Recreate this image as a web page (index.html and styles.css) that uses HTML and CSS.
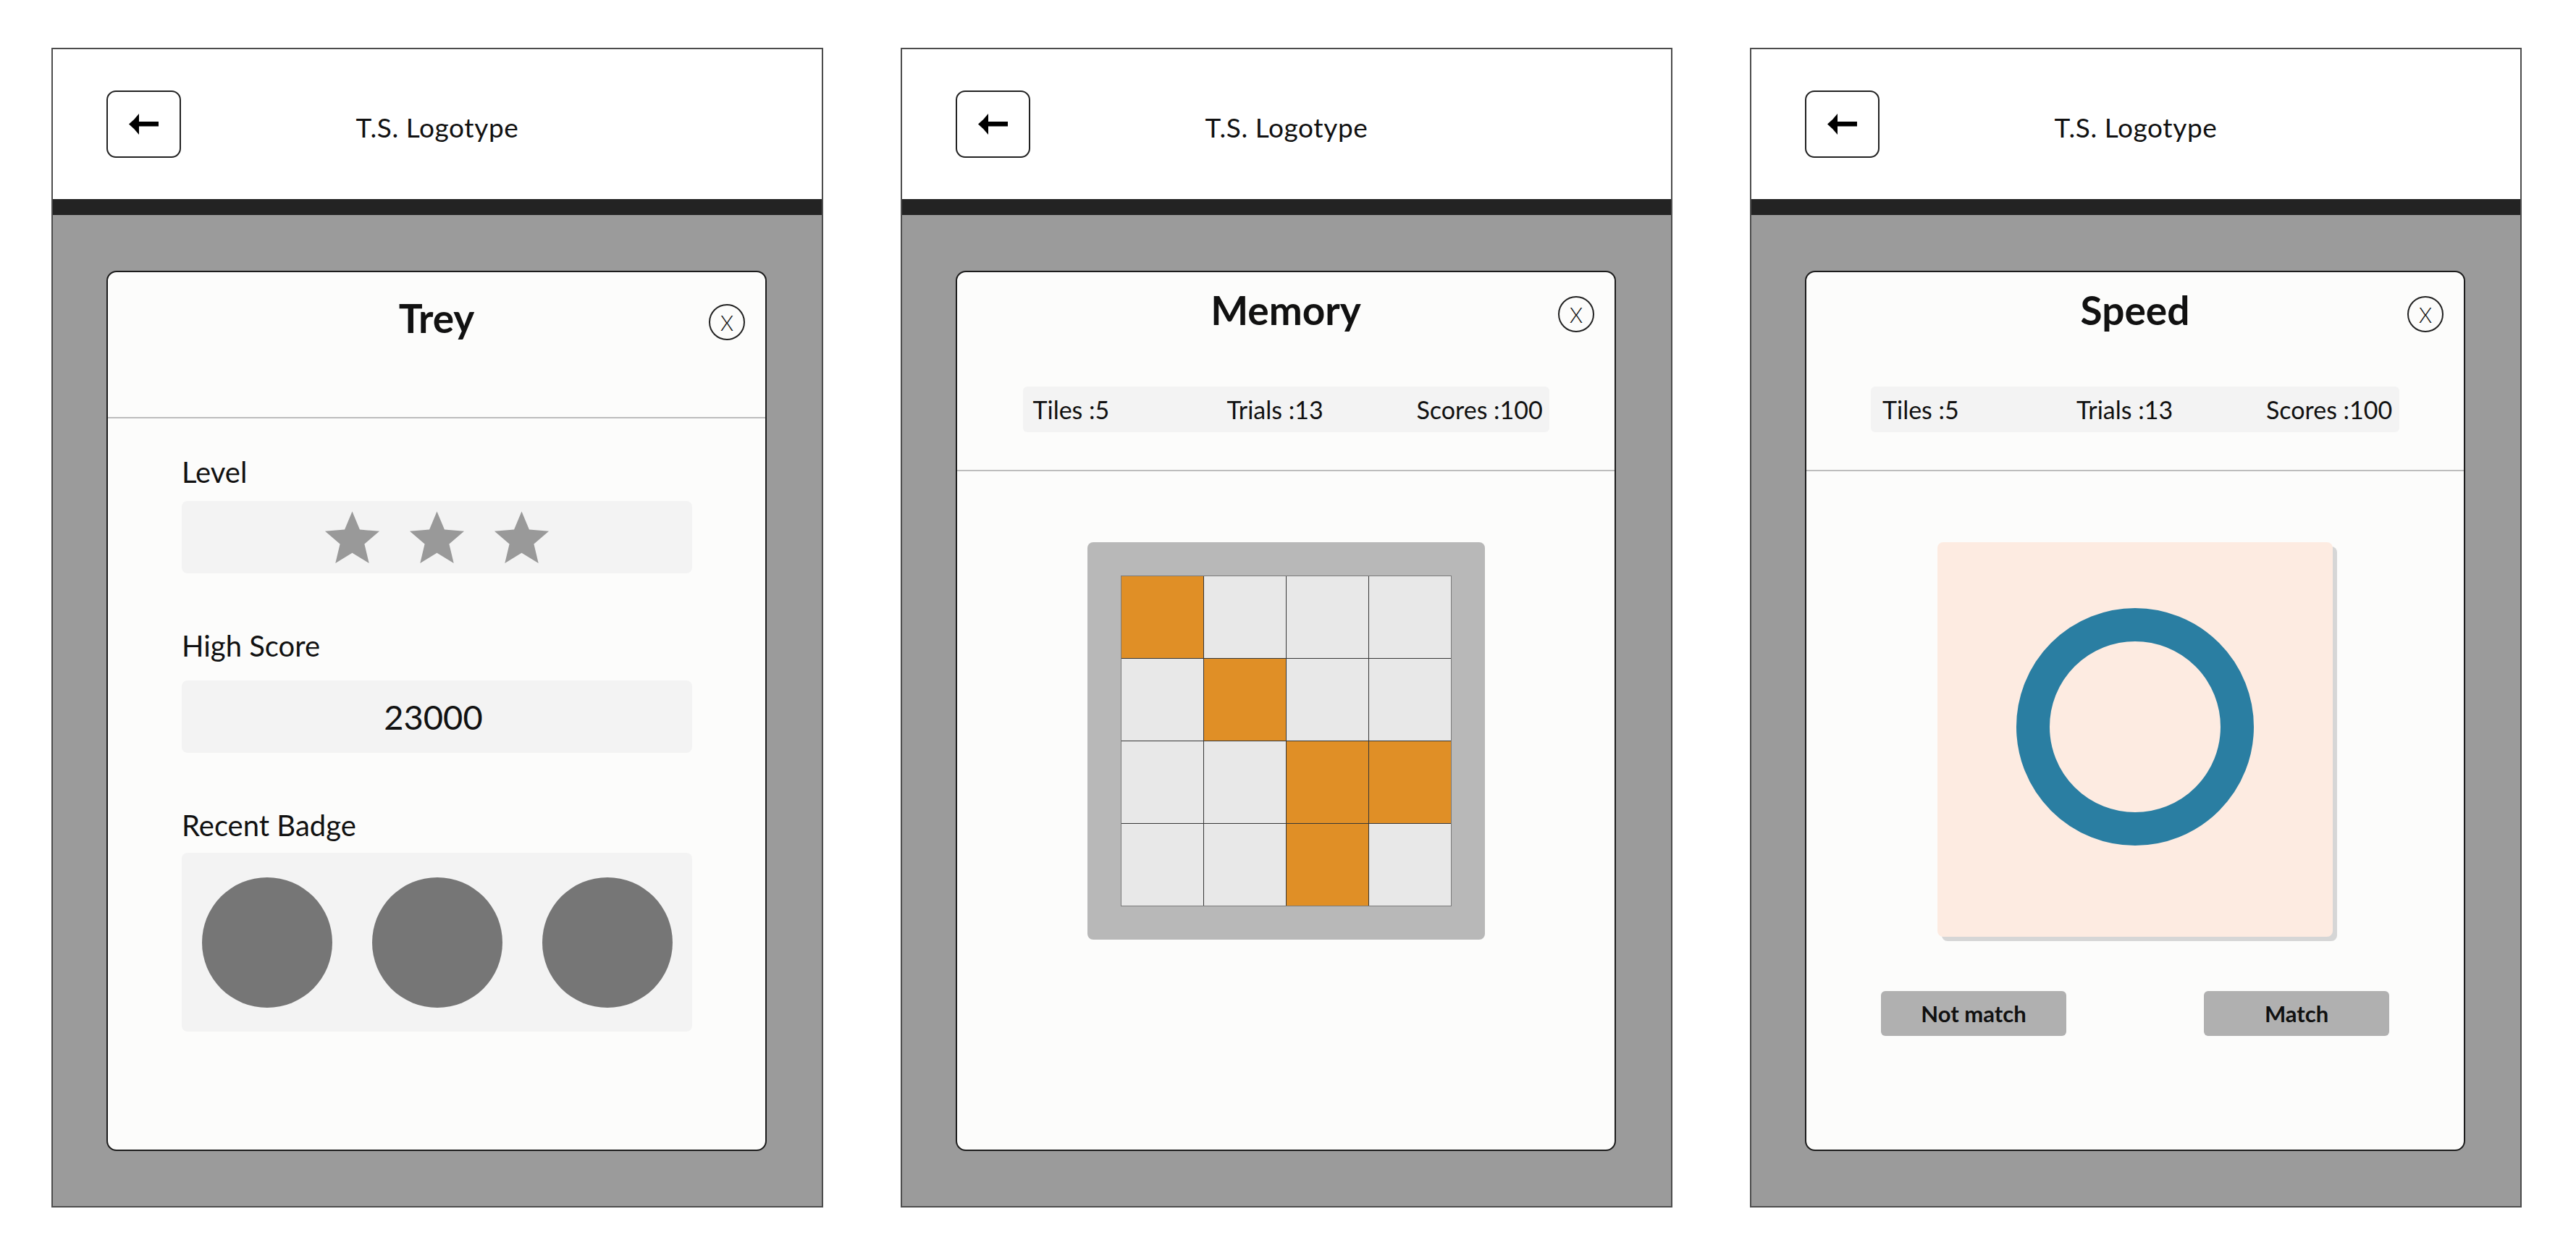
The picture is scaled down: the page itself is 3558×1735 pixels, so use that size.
FILE: index.html
```html
<!DOCTYPE html>
<html lang="en">
<head>
<meta charset="utf-8">
<title>T.S. Screens</title>
<link rel="stylesheet" href="styles.css">
</head>
<body>
<div class="page">

  <!-- Screen 1: Profile -->
  <section class="phone">
    <header class="topbar">
      <div class="back"><svg width="41" height="29" viewBox="0 0 41 29"><path d="M0,14.5 Q8,8 14,0 L14,11 L41,11 L41,17.5 L14,17.5 L14,29 Q8,21 0,14.5 Z" fill="#000"/></svg></div>
      <div class="logo">T.S. Logotype</div>
    </header>
    <div class="strip"></div>
    <div class="stage">
      <div class="modal">
        <div class="modal-head tall">
          <div class="title-row">
            <h1 class="title">Trey</h1>
            <div class="close">X</div>
          </div>
        </div>
        <div class="profile">
          <div class="field">
            <div class="label lvl">Level</div>
            <div class="box stars">
              <svg class="star" width="77" height="73" viewBox="-39 -40 78 73"><polygon points="0,-40 10.58,-14.56 38.04,-12.36 17.12,5.56 23.51,32.36 0,18 -23.51,32.36 -17.12,5.56 -38.04,-12.36 -10.58,-14.56"/></svg>
              <svg class="star" width="77" height="73" viewBox="-39 -40 78 73"><polygon points="0,-40 10.58,-14.56 38.04,-12.36 17.12,5.56 23.51,32.36 0,18 -23.51,32.36 -17.12,5.56 -38.04,-12.36 -10.58,-14.56"/></svg>
              <svg class="star" width="77" height="73" viewBox="-39 -40 78 73"><polygon points="0,-40 10.58,-14.56 38.04,-12.36 17.12,5.56 23.51,32.36 0,18 -23.51,32.36 -17.12,5.56 -38.04,-12.36 -10.58,-14.56"/></svg>
            </div>
          </div>
          <div class="field">
            <div class="label hs">High Score</div>
            <div class="box score">23000</div>
          </div>
          <div class="field">
            <div class="label rb">Recent Badge</div>
            <div class="box badges">
              <div class="badge"></div>
              <div class="badge"></div>
              <div class="badge"></div>
            </div>
          </div>
        </div>
      </div>
    </div>
  </section>

  <!-- Screen 2: Memory -->
  <section class="phone">
    <header class="topbar">
      <div class="back"><svg width="41" height="29" viewBox="0 0 41 29"><path d="M0,14.5 Q8,8 14,0 L14,11 L41,11 L41,17.5 L14,17.5 L14,29 Q8,21 0,14.5 Z" fill="#000"/></svg></div>
      <div class="logo">T.S. Logotype</div>
    </header>
    <div class="strip"></div>
    <div class="stage">
      <div class="modal">
        <div class="modal-head">
          <div class="title-row">
            <h1 class="title">Memory</h1>
            <div class="close">X</div>
          </div>
          <div class="stats">
            <span>Tiles :5</span>
            <span>Trials :13</span>
            <span>Scores :100</span>
          </div>
        </div>
        <div class="game">
          <div class="board">
            <div class="tiles">
              <div class="tile on"></div><div class="tile"></div><div class="tile"></div><div class="tile"></div>
              <div class="tile"></div><div class="tile on"></div><div class="tile"></div><div class="tile"></div>
              <div class="tile"></div><div class="tile"></div><div class="tile on"></div><div class="tile on"></div>
              <div class="tile"></div><div class="tile"></div><div class="tile on"></div><div class="tile"></div>
            </div>
          </div>
        </div>
      </div>
    </div>
  </section>

  <!-- Screen 3: Speed -->
  <section class="phone">
    <header class="topbar">
      <div class="back"><svg width="41" height="29" viewBox="0 0 41 29"><path d="M0,14.5 Q8,8 14,0 L14,11 L41,11 L41,17.5 L14,17.5 L14,29 Q8,21 0,14.5 Z" fill="#000"/></svg></div>
      <div class="logo">T.S. Logotype</div>
    </header>
    <div class="strip"></div>
    <div class="stage">
      <div class="modal">
        <div class="modal-head">
          <div class="title-row">
            <h1 class="title">Speed</h1>
            <div class="close">X</div>
          </div>
          <div class="stats wide">
            <span>Tiles :5</span>
            <span>Trials :13</span>
            <span>Scores :100</span>
          </div>
        </div>
        <div class="game">
          <div class="card">
            <div class="ring"></div>
          </div>
          <div class="actions">
            <div class="btn">Not match</div>
            <div class="btn">Match</div>
          </div>
        </div>
      </div>
    </div>
  </section>

</div>
</body>
</html>
```
FILE: styles.css
```css
html, body {
  margin: 0;
  padding: 0;
  background: #ffffff;
}

body {
  font-family: Lato, "Open Sans", "DejaVu Sans", sans-serif;
  color: #111111;
}

.page {
  display: flex;
  gap: 107px;
  padding: 66px 0 0 71px;
}

.phone {
  width: 1066px;
  height: 1602px;
  box-sizing: border-box;
  border: 2px solid #4d4d4d;
  background: #9b9b9b;
  display: flex;
  flex-direction: column;
  flex-shrink: 0;
}

.topbar {
  height: 207px;
  flex-shrink: 0;
  background: #ffffff;
  display: grid;
  grid-template-columns: 1fr auto 1fr;
  align-items: center;
  padding: 0 74px;
}

.back {
  width: 103px;
  height: 93px;
  box-sizing: border-box;
  border: 2px solid #222222;
  border-radius: 13px;
  display: flex;
  align-items: center;
  justify-content: center;
}

.logo {
  font-size: 37px;
  line-height: 44px;
  letter-spacing: 0.6px;
  margin-top: 8px;
}

.strip {
  height: 22px;
  flex-shrink: 0;
  background: #232323;
}

.stage {
  flex: 1;
  display: flex;
  padding: 77px 76px 76px 74px;
}

.modal {
  flex: 1;
  display: flex;
  flex-direction: column;
  background: #fcfcfb;
  border: 2px solid #1c1c1c;
  border-radius: 14px;
  overflow: hidden;
}

.modal-head {
  padding: 19px 0 52px;
  border-bottom: 2px solid #bdbdbd;
}

.modal-head.tall {
  padding: 30px 0 104px;
}

.title-row {
  display: grid;
  grid-template-columns: 1fr auto 1fr;
  align-items: start;
}

.title {
  grid-column: 2;
  margin: 0;
  font-size: 55px;
  line-height: 66px;
  font-weight: 700;
}

.close {
  grid-column: 3;
  justify-self: end;
  margin: 14px 28px 0 0;
  width: 50px;
  height: 50px;
  box-sizing: border-box;
  border: 2px solid #222222;
  border-radius: 50%;
  display: flex;
  align-items: center;
  justify-content: center;
  font-size: 29px;
  font-weight: 300;
  line-height: 1;
}

.stats {
  width: 727px;
  height: 63px;
  box-sizing: border-box;
  margin: 73px auto 0;
  padding-left: 14px;
  background: #f3f3f3;
  border-radius: 6px;
  display: grid;
  grid-template-columns: 268px 262px auto;
  align-items: center;
  font-size: 34px;
  line-height: 41px;
}

.stats.wide {
  width: 730px;
  padding-left: 16px;
}

/* Profile */
.profile {
  padding: 50px 101px 0 102px;
}

.field + .field {
  margin-top: 76px;
}

.label {
  font-size: 40px;
  line-height: 48px;
}

.label.lvl { margin-bottom: 16px; }
.label.hs { margin-bottom: 24px; }
.label.rb { margin-bottom: 14px; }

.box {
  height: 100px;
  background: #f3f3f3;
  border-radius: 8px;
  display: flex;
  align-items: center;
  justify-content: center;
}

.stars {
  gap: 40px;
}

.star {
  fill: #999999;
}

.score {
  font-size: 47px;
  padding-right: 10px;
}

.badges {
  height: 247px;
  justify-content: space-around;
}

.badge {
  width: 180px;
  height: 180px;
  border-radius: 50%;
  background: #767676;
}

/* Games */
.game {
  padding-top: 98px;
  display: flex;
  flex-direction: column;
  align-items: center;
}

.board {
  width: 549px;
  height: 549px;
  box-sizing: border-box;
  padding: 46px;
  background: #b8b8b8;
  border-radius: 8px;
}

.tiles {
  height: 100%;
  box-sizing: border-box;
  display: grid;
  grid-template-columns: repeat(4, 1fr);
  grid-template-rows: repeat(4, 1fr);
  gap: 1px;
  background: #363636;
  border: 1px solid #7a7a7a;
}

.tile {
  background: #e8e8e8;
}

.tile.on {
  background: #e08f26;
}

.card {
  width: 546px;
  height: 545px;
  background: #fdebe1;
  border-radius: 8px;
  box-shadow: 6px 6px 0 #d6d6d6;
  display: flex;
  align-items: center;
  justify-content: center;
}

.ring {
  width: 328px;
  height: 328px;
  box-sizing: border-box;
  border: 46px solid #2a7ea2;
  border-radius: 50%;
  margin-bottom: 35px;
}

.actions {
  align-self: stretch;
  display: flex;
  justify-content: space-between;
  padding: 0 103px;
  margin-top: 75px;
}

.btn {
  width: 256px;
  height: 62px;
  background: #b0b0b0;
  border-radius: 6px;
  display: flex;
  align-items: center;
  justify-content: center;
  font-size: 31px;
  font-weight: 700;
}
```
